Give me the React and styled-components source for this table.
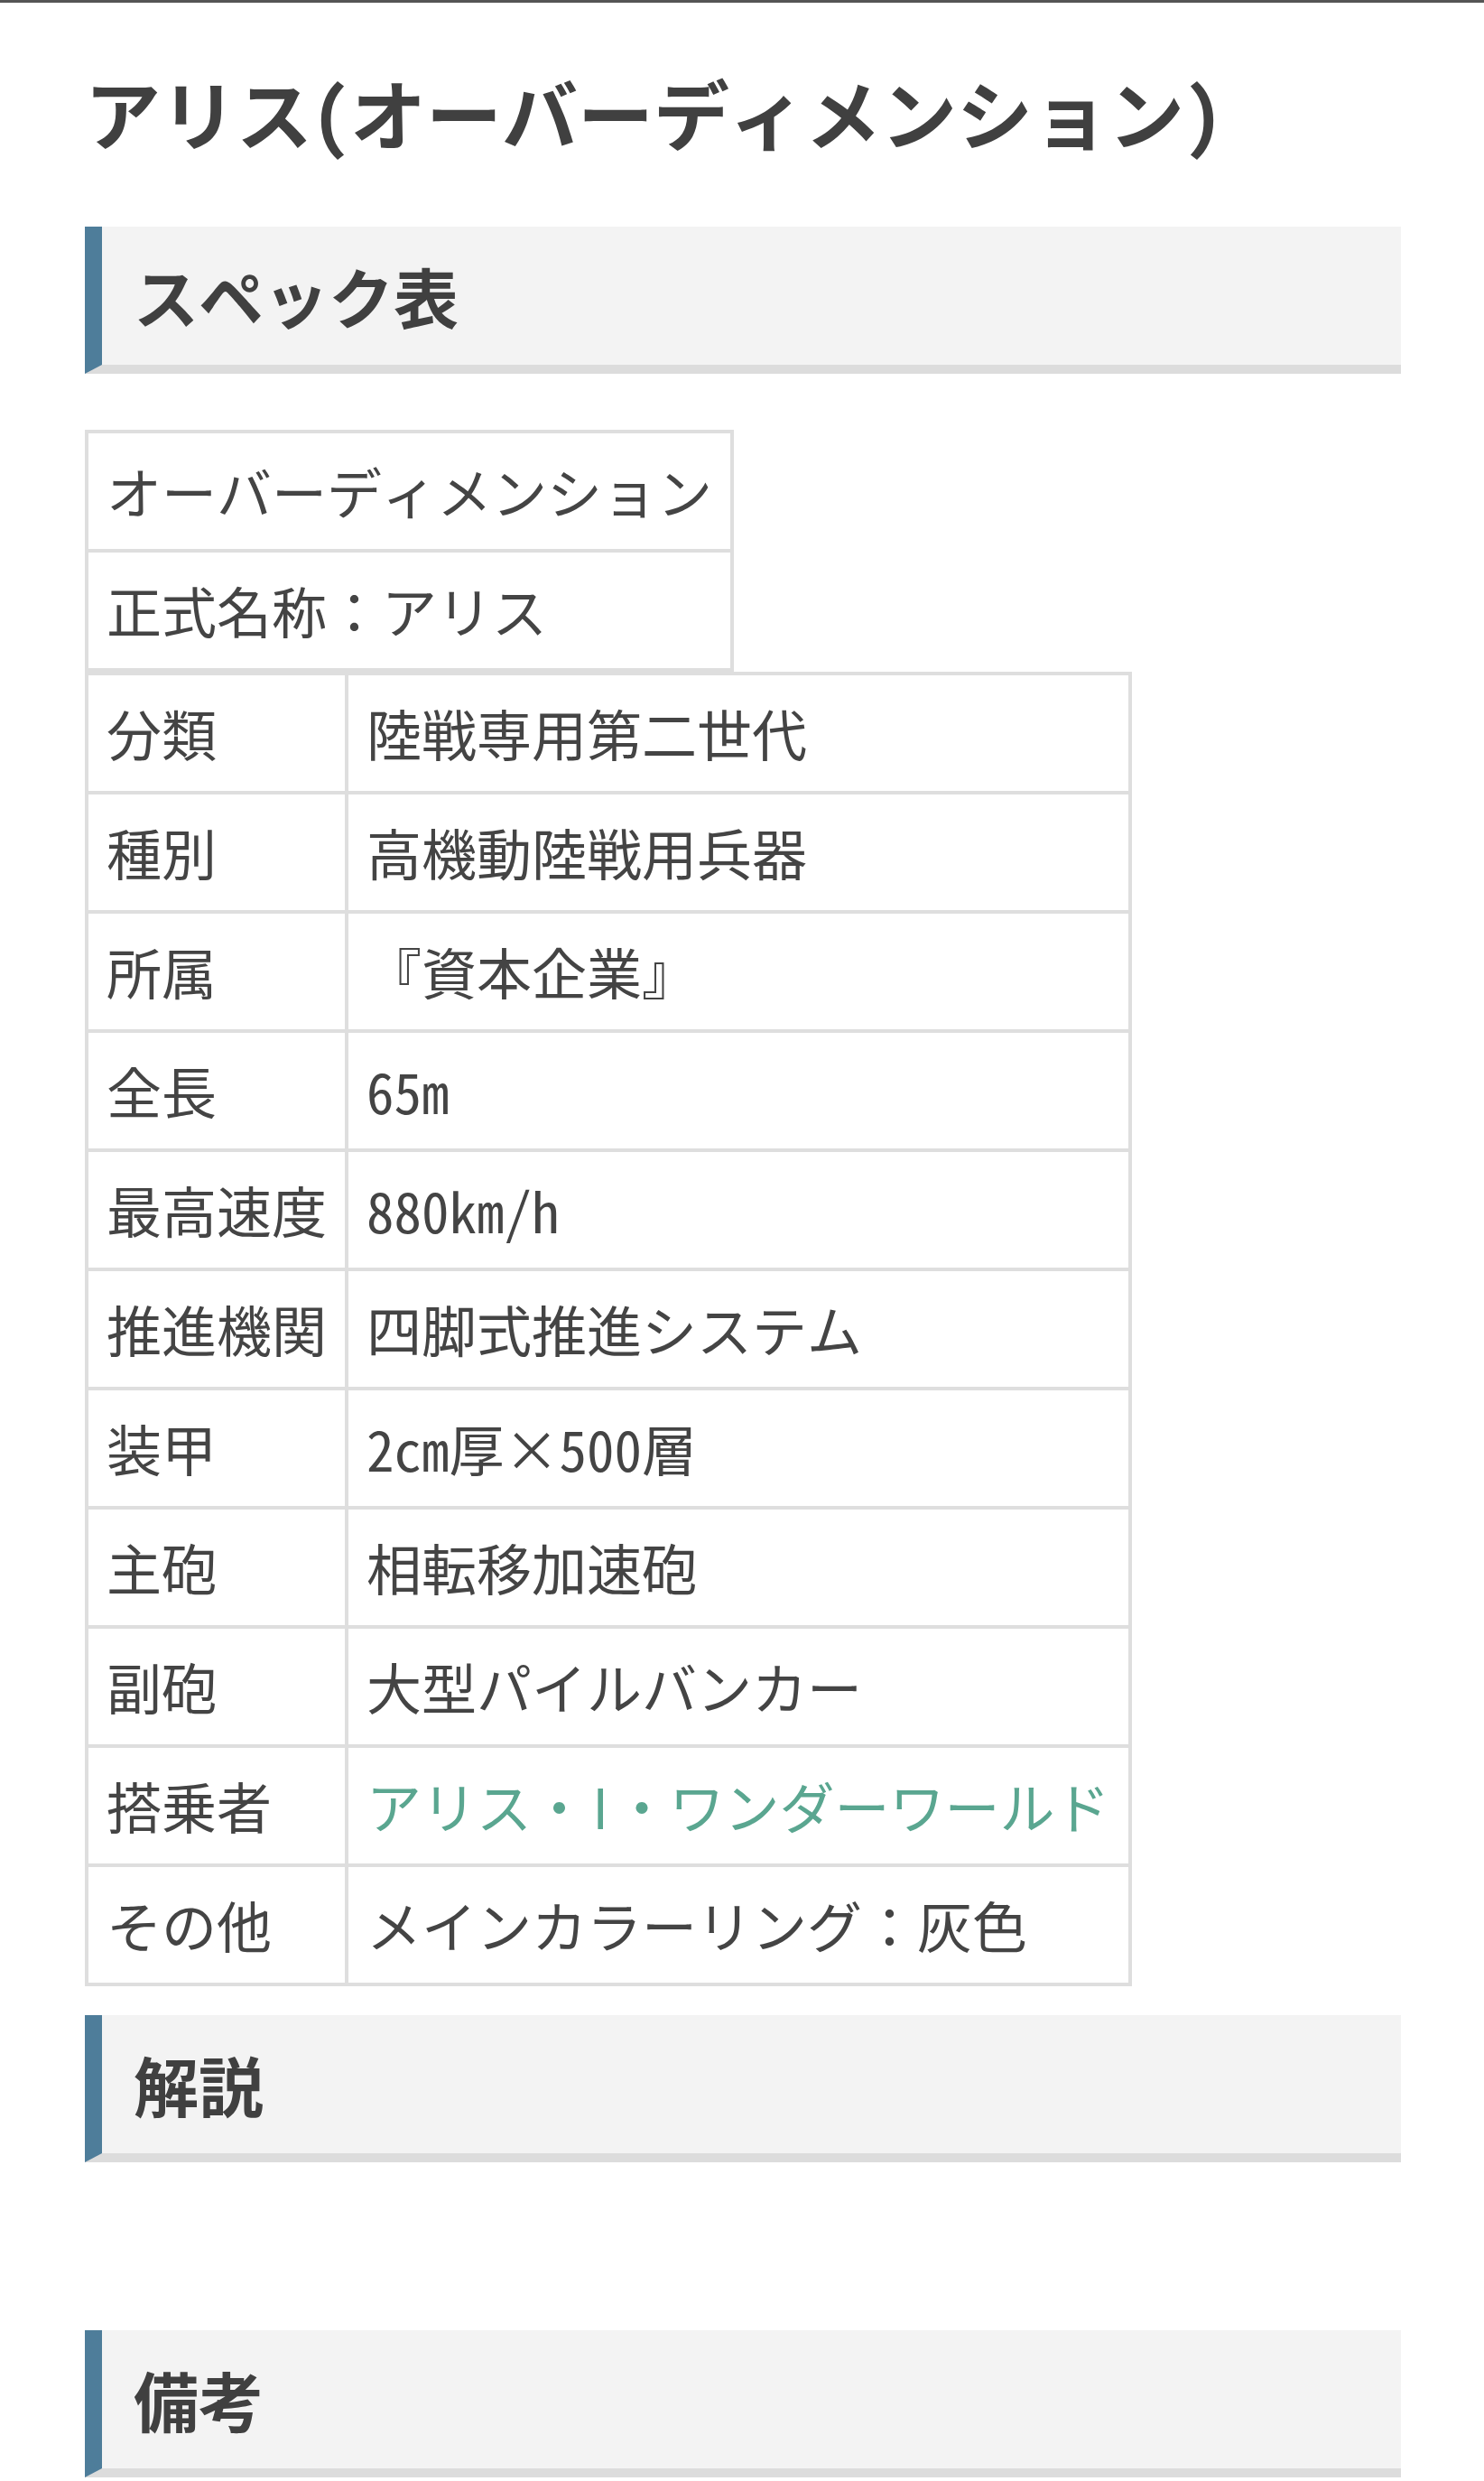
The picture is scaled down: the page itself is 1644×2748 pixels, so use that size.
import React from "react";
import styled, { createGlobalStyle } from "styled-components";

const GlobalStyle = createGlobalStyle`
  html, body {
    margin: 0;
    padding: 0;
    background: #ffffff;
  }
  body {
    font-family: "Noto Sans Mono CJK JP", "Noto Sans CJK JP", "Noto Sans", sans-serif;
    color: #444444;
  }
`;

const Page = styled.div`
  border-top: 3px solid #555555;
  padding: 0 92px 40px 94px;
`;

const Title = styled.h1`
  margin: 62px 0 68px;
  font-size: 84px;
  line-height: 118px;
  font-weight: 700;
  color: #404040;
`;

const SectionHeading = styled.h2`
  margin: ${(p) => p.$mt || 0}px 0 62px;
  padding: 22px 0 23px 35px;
  font-size: 72px;
  line-height: 108px;
  font-weight: 700;
  color: #404040;
  background: #f3f3f3;
  border-left: 19px solid #4e7d9a;
  border-bottom: 10px solid #dcdcdc;
`;

const SpecTable = styled.table`
  border-collapse: collapse;
  font-size: 61px;
  line-height: 90px;
  color: #444444;
`;

const Cell = styled.td`
  border: 4px solid #dedede;
  padding: 19px 20px;
  white-space: nowrap;
  vertical-align: middle;
`;

const Link = styled.a`
  color: #5aa690;
  text-decoration: none;
`;

const NarrowLetter = styled.span`
  display: inline-block;
  width: 0.5em;
  text-align: center;
  font-family: "Noto Sans CJK JP", "Noto Sans", sans-serif;
`;

const EmptyBody = styled.div`
  height: 92px;
`;

const specRows = [
  ["分類", "陸戦専用第二世代"],
  ["種別", "高機動陸戦用兵器"],
  ["所属", "『資本企業』"],
  ["全長", "65m"],
  ["最高速度", "880km/h"],
  ["推進機関", "四脚式推進システム"],
  ["装甲", "2cm厚×500層"],
  ["主砲", "相転移加速砲"],
  ["副砲", "大型パイルバンカー"],
  ["搭乗者", null],
  ["その他", "メインカラーリング：灰色"],
];

export default function App() {
  return (
    <>
      <GlobalStyle />
      <Page>
        <Title>アリス(オーバーディメンション)</Title>

        <SectionHeading>スペック表</SectionHeading>

        <SpecTable>
          <tbody>
            <tr>
              <Cell>オーバーディメンション</Cell>
            </tr>
            <tr>
              <Cell>正式名称：アリス</Cell>
            </tr>
          </tbody>
        </SpecTable>

        <SpecTable>
          <tbody>
            {specRows.map(([label, value]) => (
              <tr key={label}>
                <Cell>{label}</Cell>
                <Cell>
                  {value === null ? (
                    <Link href="#">
                      アリス・<NarrowLetter>I</NarrowLetter>・ワンダーワールド
                    </Link>
                  ) : (
                    value
                  )}
                </Cell>
              </tr>
            ))}
          </tbody>
        </SpecTable>

        <SectionHeading $mt={32}>解説</SectionHeading>
        <EmptyBody />

        <SectionHeading $mt={32}>備考</SectionHeading>
      </Page>
    </>
  );
}
